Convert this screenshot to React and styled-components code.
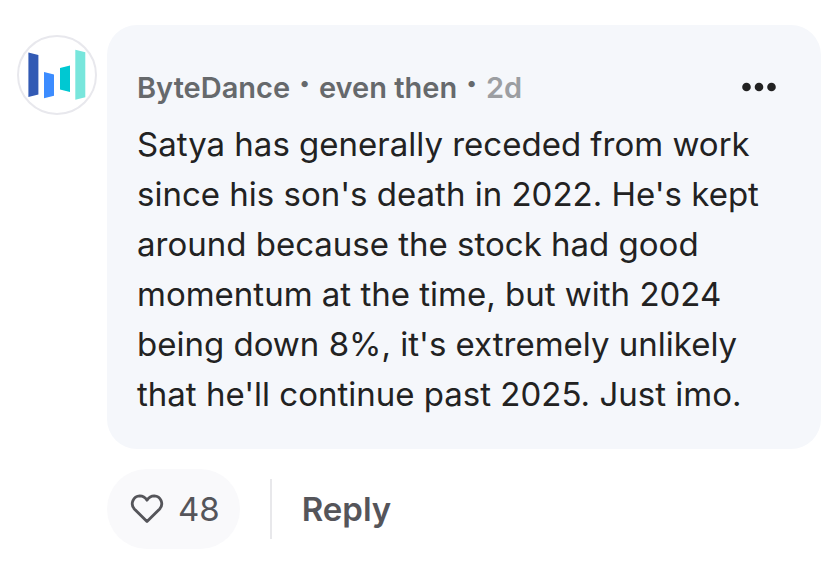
import React from 'react';
import styled, { createGlobalStyle } from 'styled-components';

const Global = createGlobalStyle`
  * { box-sizing: border-box; }
  body { margin: 0; background: #fff; font-family: Inter, "Liberation Sans", sans-serif; }
`;
const Comment = styled.article`
  display: grid;
  grid-template-columns: 80px 1fr;
  column-gap: 10px;
  padding: 25px 18px 28px 17px;
`;
const Avatar = styled.div`
  width: 80px;
  height: 80px;
  margin-top: 10px;
  border: 2px solid #e8e8ed;
  border-radius: 50%;
  overflow: hidden;
  background: #fff;
  svg { display: block; width: 100%; height: 100%; }
`;
const Bubble = styled.div`
  padding: 40px 30px 30px;
  border-radius: 30px;
  background: #f5f7fb;
`;
const Header = styled.header`
  display: flex;
  align-items: center;
  justify-content: space-between;
  height: 44px;
  padding-right: 14px;
`;
const Meta = styled.div`
  display: flex;
  gap: 8px;
  padding-top: 2px;
  font-size: 29px;
  line-height: 44px;
  font-weight: 600;
  color: #66696c;
`;
const Separator = styled.span`
  font-size: 40px;
  line-height: 36px;
`;
const Time = styled.time`
  color: #9c9ea2;
`;
const MoreButton = styled.button`
  display: flex;
  padding: 0;
  border: 0;
  background: none;
  color: #222;
`;
const Body = styled.p`
  margin: 10px 0 0;
  font-size: 33px;
  line-height: 50px;
  color: #222;
`;
const Actions = styled.footer`
  grid-column: 2;
  display: flex;
  align-items: center;
  margin-top: 20px;
`;
const LikeButton = styled.button`
  display: flex;
  align-items: center;
  gap: 14px;
  height: 80px;
  padding: 0 20px 0 23px;
  border: 0;
  border-radius: 40px;
  background: #f9f9fb;
  color: #55555a;
  font: 400 33px/50px Inter, sans-serif;
`;
const Divider = styled.span`
  width: 2px;
  height: 60px;
  margin: 0 30px;
  background: #e8e8eb;
`;
const ReplyButton = styled.button`
  padding: 0;
  border: 0;
  background: none;
  color: #55555a;
  font: 600 33px/50px Inter, sans-serif;
`;

export default function App() {
  return (
    <>
      <Global />
      <Comment>
        <Avatar>
          <svg viewBox="0 0 76 76" role="img" aria-label="ByteDance">
            <path fill="#325ab4" d="M9.4 15.5l10 2.4v39.6l-10 2.5z" />
            <path fill="#3c8cff" d="M25 35l10 2.4v21.4L25 61.2z" />
            <path fill="#00c8d2" d="M51 28.6V55l-10-2.4V31z" />
            <path fill="#78e6dc" d="M66.3 15.2v45l-10 2.6V12.8z" />
          </svg>
        </Avatar>
        <Bubble>
          <Header>
            <Meta>
              <span>ByteDance</span>
              <Separator>·</Separator>
              <span>even then</span>
              <Separator>·</Separator>
              <Time>2d</Time>
            </Meta>
            <MoreButton aria-label="More options">
              <svg width="36" height="12" viewBox="0 0 36 12" fill="currentColor">
                <circle cx="5.5" cy="6" r="4.3" />
                <circle cx="18" cy="6" r="4.3" />
                <circle cx="30.5" cy="6" r="4.3" />
              </svg>
            </MoreButton>
          </Header>
          <Body>
            Satya has generally receded from work since his son's death in 2022. He's kept around because the stock had good momentum at the time, but with 2024 being down 8%, it's extremely unlikely that he'll continue past 2025. Just imo.
          </Body>
        </Bubble>
        <Actions>
          <LikeButton aria-label="Like, 48">
            <svg width="34" height="30" viewBox="0 0 34 30" fill="none" stroke="currentColor" strokeWidth="2.8" strokeLinejoin="round">
              <path d="M17 27.5L4.3 14.9A7.8 7.8 0 0 1 9.8 1.9C13 1.9 15.3 3.6 17 6.2C18.7 3.6 21 1.9 24.2 1.9A7.8 7.8 0 0 1 29.7 14.9Z" />
            </svg>
            <span>48</span>
          </LikeButton>
          <Divider />
          <ReplyButton>Reply</ReplyButton>
        </Actions>
      </Comment>
    </>
  );
}
